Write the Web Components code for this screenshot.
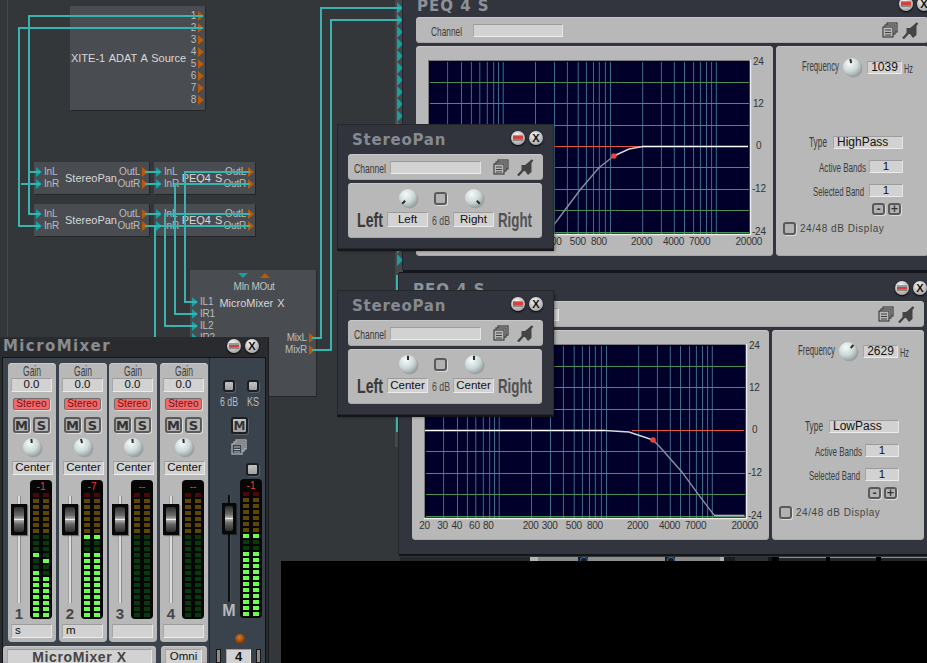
<!DOCTYPE html>
<html><head><meta charset="utf-8"><title>MicroMixer</title>
<style>html,body{margin:0;padding:0;background:#33373a;overflow:hidden}</style></head>
<body>
<x-desktop>
  <x-strip-hidden></x-strip-hidden>
  <x-node style="left:70px;top:6px;width:135px;height:104px" name="XITE-1 ADAT A Source" outs="1,2,3,4,5,6,7,8" outw="18"></x-node>
  <x-node style="left:34px;top:162px;width:115px;height:32px" name="StereoPan" ins="InL,InR" outs="OutL,OutR" inw="28" outw="29"></x-node>
  <x-node style="left:34px;top:204px;width:115px;height:32px" name="StereoPan" ins="InL,InR" outs="OutL,OutR" inw="28" outw="29"></x-node>
  <x-node style="left:154px;top:162px;width:101px;height:32px" name="PEQ4 S" ins="InL,InR" outs="OutL,OutR" inw="25" outw="30"></x-node>
  <x-node style="left:154px;top:204px;width:101px;height:32px" name="PEQ4 S" ins="InL,InR" outs="OutL,OutR" inw="25" outw="30"></x-node>
  <x-node style="left:190px;top:270px;width:126px;height:126px" name="MicroMixer X" ins="IL1,IR1,IL2,IR2" outs="MixL,MixR" inw="28" outw="30" intop="26" outtop="62" header></x-node>
  <x-wires></x-wires>
  <x-rail></x-rail>
  <x-peq style="left:403px;top:-11px" freq="1039" type="HighPass" angle="-12" mode="hp"></x-peq>
  <x-peq style="left:399px;top:273px" freq="2629" type="LowPass" angle="42" mode="lp"></x-peq>
  <x-pan style="left:338px;top:125px" l="Left" r="Right" la="-135" ra="135"></x-pan>
  <x-pan style="left:338px;top:291px" l="Center" r="Center" la="0" ra="0"></x-pan>
  <x-void></x-void>
  <x-mixer></x-mixer>
</x-desktop>
<script>
const FONT='"Liberation Sans",Arial,sans-serif';
const BASE=`*{box-sizing:border-box}`;
function def(name,fn){customElements.define(name,class extends HTMLElement{
  connectedCallback(){ if(this.shadowRoot) return; const r=this.attachShadow({mode:'open'}); r.innerHTML=fn.call(this,a=>this.getAttribute(a)); }
});}
const ctx=document.createElement('canvas').getContext('2d');

/* condensed label: text squeezed to the requested width */
def('x-n',function(a){
  const w=+a('w'),fs=+(a('fs')||12),b=this.hasAttribute('b')?'bold ':'';
  ctx.font=`${b}${fs}px "Liberation Sans"`;
  const s=w/ctx.measureText(this.textContent).width;
  return `<style>:host{display:inline-block;width:${w}px;height:${fs}px;line-height:${fs}px;white-space:nowrap;flex:none}
  span{display:inline-block;transform-origin:0 50%;transform:scaleX(${s.toFixed(3)});font:${b}${fs}px/${fs}px ${FONT}}</style><span><slot></slot></span>`;
});

def('x-field',function(a){
  const al=a('align')||'center';
  return `<style>${BASE}:host{display:flex;align-items:center;justify-content:${al};flex:none;
   background:#d2d2d2;color:#111;font:11.500px/1 ${FONT};white-space:nowrap;padding:0 ${al=='center'?0:3}px;
   border-top:1px solid #9c9c9c;border-left:1px solid #a6a6a6;border-right:1px solid #e6e6e6;border-bottom:1px solid #ececec}</style><slot></slot>`;
});

def('x-panel',function(){
  return `<style>${BASE}:host{display:block;background:#b8b8b8;border-radius:4px;flex:none;box-shadow:inset 0 1px 0 #c8c8c8,inset 0 -1px 0 #a6a6a6}</style><slot></slot>`;
});

def('x-knob',function(a){
  const an=+(a('angle')||0),id='k'+Math.random().toString(36).slice(2);
  return `<style>:host{display:block;width:18px;height:18px;flex:none}svg{display:block;overflow:visible}</style>
  <svg width="18" height="18" viewBox="0 0 18 18"><defs><radialGradient id="${id}" cx=".38" cy=".3" r=".8"><stop offset="0" stop-color="#f6fafa"/><stop offset=".55" stop-color="#ccd8d8"/><stop offset="1" stop-color="#8c9c9c"/></radialGradient></defs>
  <circle cx="10.500" cy="10.500" r="9" fill="#8c8c8c" opacity=".55"/><circle cx="9" cy="9" r="9" fill="url(#${id})"/>
  <line x1="9" y1="0.800" x2="9" y2="5" stroke="#2c2c2c" stroke-width="2" transform="rotate(${an} 9 9)"/></svg>`;
});

def('x-sq',function(a){
  const dark=this.hasAttribute('dark');
  return `<style>${BASE}:host{display:flex;align-items:center;justify-content:center;flex:none;width:12px;height:12px;
   border:2px solid ${dark?'#1b1e23':'#5a5a5a'};border-radius:3px;background:${dark?'linear-gradient(#c4c4c4,#a0a0a0)':'#b2b2b2'};
   box-shadow:1px 1px 0 ${dark?'#596068':'#dcdcdc'};color:#333;font:bold 12px/1 "DejaVu Sans",sans-serif}</style><slot></slot>`;
});

def('x-copy',function(a){
  const c=a('c')||'#3f3f3f',bg=a('bg')||'#b8b8b8';
  return `<style>:host{display:block;width:16px;height:16px;flex:none}svg{display:block}</style>
  <svg width="16" height="16" viewBox="0 0 16 16" fill="${bg}" stroke="${c}" stroke-width="1.200"><rect x="5" y="1" width="10" height="9"/><rect x="3" y="3" width="10" height="9"/><rect x="1" y="5" width="10" height="10"/><path d="M3 8h6M3 10.500h6M3 13h6"/></svg>`;
});

def('x-mute',function(){
  return `<style>:host{display:block;width:17px;height:17px;flex:none}svg{display:block}</style>
  <svg width="17" height="17" viewBox="0 0 17 17"><path d="M4.500 6h3.500l6.500-5v12l-3.500 3-3-4h-3.500z" fill="#444"/><path d="M1 16.500L15.500 1" stroke="#444" stroke-width="2.400"/></svg>`;
});

def('x-winbtns',function(){
  return `<style>${BASE}:host{display:flex;gap:4px;flex:none}
  .b{width:14px;height:14px;border-radius:50%;background:radial-gradient(circle at 40% 30%,#f4f4f4,#a8a8a8 75%,#6e6e6e);box-shadow:0 1px 2px #000;display:flex;align-items:center;justify-content:center}
  .m{width:10px;height:6px;background:linear-gradient(#999 0 1.500px,#d6403c 1.500px 4px,#888 4px)}
  .x{font:bold 11px/1 ${FONT};color:#111}</style>
  <div class="b"><div class="m"></div></div><div class="b"><span class="x">X</span></div>`;
});

def('x-desktop',function(){
  return `<style>${BASE}:host{display:block;position:relative;width:927px;height:663px;overflow:hidden;background:#33373a;font-family:${FONT}}
  .guide{position:absolute;left:7px;top:0;bottom:0;width:1px;background:#44484c}</style><div class="guide"></div><slot></slot>`;
});

def('x-strip-hidden',function(){
  let t='';for(let i=0;i<22;i++)t+=`<i></i>`;
  return `<style>${BASE}:host{position:absolute;left:395px;top:0;width:8px;height:447px;background:#44474c}
  div{display:flex;flex-direction:column;padding-top:2px}
  i{display:block;width:0;height:0;margin:0 0 0 2px;border-left:6px solid #12a2a2;border-top:6px solid transparent;border-bottom:6px solid transparent}</style><div>${t}</div>`;
});

def('x-node',function(a){
  const port=(t,side)=>`<div class="p ${side}">${side=='i'?'<b></b>':''}<span>${t}</span>${side=='o'?'<b></b>':''}</div>`;
  const ins=(a('ins')||'').split(',').filter(Boolean),outs=(a('outs')||'').split(',').filter(Boolean);
  const head=this.hasAttribute('header');
  return `<style>${BASE}:host{position:absolute;display:flex;background:#494c51;color:#d8d8d8;font:11px/1 ${FONT};box-shadow:1px 1px 0 #232528;white-space:nowrap}
  .col{flex:none;display:flex;flex-direction:column}
  .in{width:${a('inw')||0}px;padding-top:${a('intop')||4}px}
  .out{width:${a('outw')||0}px;padding-top:${a('outtop')||4}px}
  .c{flex:1;display:flex;flex-direction:column;align-items:center;justify-content:${head?'flex-start':'center'};min-width:0;word-spacing:1px}
  .p{height:12px;display:flex;align-items:center;font-size:10px;color:#bcbcbc;letter-spacing:-.2px}
  .p.o{justify-content:flex-end}
  .p b{display:block;width:0;height:0;border-top:5px solid transparent;border-bottom:5px solid transparent}
  .p.i b{border-left:6px solid #12a2a2;margin:0 2px 0 2px}
  .p.o b{border-left:6px solid #b85a08;margin:0 1px 0 2px}
  .h{display:flex;flex-direction:column;align-items:center;font-size:10px;color:#c0c0c0;margin-bottom:6px;letter-spacing:-.35px;word-spacing:0;transform:translateX(2px)}
  .t{display:flex;gap:12px;height:11px;padding-top:3px;margin-bottom:1px}
  .t i{display:block;width:0;height:0;border-left:5px solid transparent;border-right:5px solid transparent}
  .d{border-top:5px solid #12a2a2}.u{border-bottom:5px solid #b85a08}
  </style>
  ${ins.length?`<div class="col in">${ins.map(t=>port(t,'i')).join('')}</div>`:''}
  <div class="c">${head?`<div class="h"><div class="t"><i class="d"></i><i class="u"></i></div><span>MIn MOut</span></div>`:''}<span>${a('name')}</span></div>
  <div class="col out">${outs.map(t=>port(t,'o')).join('')}</div>`;
});

def('x-wires',function(){
  const d=['M203 16H29V214H40','M29 172H40','M203 28H19V226H40','M21 184H40',
   'M145 172H160','M145 184H160','M145 214H160','M145 226H160',
   'M250 172H185V302H197','M250 184H175V314H197','M250 214H165V326H197','M250 226H155V338H197',
   'M312 338H321V8H401','M312 350H331V20H401','M397 275V292','M397 413V432'];
  return `<style>:host{position:absolute;left:0;top:0;width:927px;height:663px;display:block;pointer-events:none}svg{display:block}</style>
  <svg width="927" height="663" fill="none" stroke="#3ab3b0" stroke-width="2" shape-rendering="crispEdges">${d.map(p=>`<path d="${p}"/>`).join('')}</svg>`;
});

def('x-rail',function(){
  const seg=(w,c)=>`<i style="width:${w}px;background:${c}"></i>`;
  const thin=(w)=>`<i class="t" style="width:${w}px;background:#8c8c8c"></i>`;
  const dot=`<u></u>`;
  return `<style>${BASE}:host{position:absolute;left:400px;top:557px;width:527px;height:4px;display:flex;background:#24262a}
  i{display:block;height:100%}
  u{display:block;width:10px;height:100%;background:#1a1c20;position:relative}
  u::after{content:"";position:absolute;left:2px;top:0;width:6px;height:4px;border:1px solid #1f6fb5;border-radius:50%}
  .t{height:1px}
  </style>${seg(130,'#26282b')}${seg(8,'#b5b5b5')}${seg(40,'#8c8c8c')}${dot}${seg(77,'#8e8e8e')}${dot}${seg(45,'#8a8a8a')}${seg(4,'#b0b0b0')}${seg(11,'#1a1c20')}${seg(33,'#2e2f32')}${seg(4,'#17181b')}${seg(7,'#000')}${thin(47)}${seg(4,'#000')}${thin(46)}${seg(5,'#000')}${thin(46)}`;
});

def('x-void',function(){
  return `<style>${BASE}:host{position:absolute;left:281px;top:561px;width:646px;height:102px;background:#000}</style>`;
});

def('x-graph',function(a){
  const V=[19.6,33.5,43.4,51.8,59.3,65.7,70.5,75.2,107.5,126.5,139.4,150.2,158.4,165.5,171.3,177.4,182.5,214.7,233.4,246.3,256.5,265.6,272.4,278.5,283.6,288.3];
  const H=[22,43,65,107,129,150,172];
  const X=[[.5,'20'],[18.5,'30'],[32.8,'40'],[50.4,'60'],[64.3,'80'],[106.7,'200'],[125.7,'300'],[149.8,'500'],[170.9,'800'],[213.6,'2000'],[245.5,'4000'],[271.6,'7000'],[320.8,'20000']];
  const Y=[[1,'24'],[43,'12'],[85,'0'],[128,'-12'],[171,'-24']];
  const hp=a('mode')=='hp';
  const curve=hp?`<line x1="2" x2="214" y1="86.500" y2="86.500" stroke="#ea5540"/>
    <polyline points="121,172 126.500,164 152,130 170.600,108 185.900,96" fill="none" stroke="#8e8ea2" stroke-width="1.400"/>
    <polyline points="185.900,96 201,89 214.700,86.500" fill="none" stroke="#d8d8d8" stroke-width="1.400"/>
    <line x1="214" x2="320" y1="86.500" y2="86.500" stroke="#fff" stroke-width="1.500"/><circle cx="185.900" cy="96" r="2.800" fill="#f04040"/>`
   :`<line x1="208" x2="320" y1="86.500" y2="86.500" stroke="#ea5540"/>
    <line x1="1" x2="181" y1="86.500" y2="86.500" stroke="#fff" stroke-width="1.500"/>
    <polyline points="181,86.500 205,88 229,96" fill="none" stroke="#d8d8d8" stroke-width="1.400"/>
    <polyline points="229,96 235.700,102.700 257.700,127.700 276,152.700 290,171" fill="none" stroke="#8e8ea2" stroke-width="1.400"/>
    <line x1="290" x2="320.500" y1="171.500" y2="171.500" stroke="#b4b4b8" stroke-width="1.600"/><circle cx="229" cy="96" r="2.800" fill="#f04040"/>`;
  return `<style>:host{display:block;width:322px;height:174px;flex:none}svg{display:block;overflow:visible}
  text{font:10px ${FONT};fill:#333;letter-spacing:-.25px}</style>
  <svg width="322" height="174" viewBox="0 0 322 174">
  <rect width="322" height="174" fill="#00002a"/>
  ${V.map(x=>`<line x1="${x}" x2="${x}" y1="2" y2="174" stroke="#3f6c8c"/>`).join('')}
  ${H.map(y=>`<line x1="2" x2="321" y1="${y+.5}" y2="${y+.5}" stroke="#4c8e58"/>`).join('')}
  ${curve}
  <path d="M.5 174V.5H322" fill="none" stroke="#7c7c7c"/><path d="M0 174.500H322.500V0" fill="none" stroke="#ececec" stroke-width="1.500"/>
  ${X.map(([x,t])=>`<text x="${x}" y="185" text-anchor="middle">${t}</text>`).join('')}
  ${Y.map(([y,t])=>`<text x="${t=='0'?328:t[0]=='-'?324:325}" y="${y+4}">${t}</text>`).join('')}
  </svg>`;
});

def('x-peq',function(a){
  return `<style>${BASE}:host{position:absolute;display:block;width:535px;height:281px;background:#32353d;box-shadow:0 -1px 0 #15161a,0 2px 0 #15161a,-1px 0 0 #23252a;color:#3c3c3c;font-family:${FONT}}
  .bar{height:28px;display:flex;align-items:flex-end;justify-content:space-between;padding:0 7px 6px 14px}
  .title{font:bold 15px/1 "DejaVu Sans",sans-serif;letter-spacing:1px;color:#8e9298;margin-bottom:-3px}
  .wrap{padding-left:13px;width:525px}
  .ch{height:26px;display:flex;align-items:center;padding:0 9px 0 15px}
  .ch x-field{margin-left:11px;width:90px;height:13px}
  .sp{flex:1}
  .ch x-mute{margin-left:4px}
  .row{display:flex;gap:3px;margin-top:3px;height:210px}
  .gp{width:357px;padding:14px 0 0 12px}
  .rp{width:152px;display:flex;flex-direction:column}
  .rw{display:flex;align-items:center;justify-content:flex-end;padding-right:25px}
  .rw x-n{margin-right:3px}
  .v{width:34px;height:13px}
  .pm{width:13px;height:12px;font-size:10px}
  .t{font:10px/1 ${FONT};letter-spacing:.55px;color:#444;margin-left:4px}
  </style>
  <div class="bar"><span class="title">PEQ 4 S</span><x-winbtns></x-winbtns></div>
  <div class="wrap">
   <x-panel><div class="ch"><x-n w="31" fs="13">Channel</x-n><x-field></x-field><div class="sp"></div><x-copy></x-copy><x-mute></x-mute></div></x-panel>
   <div class="row">
    <x-panel class="gp"><x-graph mode="${a('mode')}"></x-graph></x-panel>
    <x-panel class="rp">
      <div class="rw" style="margin-top:11px;height:20px;padding-right:15px"><x-n w="37" fs="14" style="margin:-3px 4px 0 0">Frequency</x-n><x-knob angle="${a('angle')}"></x-knob><x-field style="width:35px;height:13px;margin:0 2px 0 6px;font-size:12px">${a('freq')}</x-field><x-n w="9" fs="13" style="margin:0">Hz</x-n></div>
      <div class="rw" style="margin-top:58px"><x-n w="18" fs="14" style="margin-right:6px">Type</x-n><x-field align="flex-start" style="width:70px;height:13px;font-size:12px">${a('type')}</x-field></div>
      <div class="rw" style="margin-top:11px"><x-n w="47" fs="13">Active Bands</x-n><x-field class="v">1</x-field></div>
      <div class="rw" style="margin-top:11px"><x-n w="51" fs="13" style="margin-right:5px">Selected Band</x-n><x-field class="v">1</x-field></div>
      <div class="rw" style="margin-top:6px;gap:3px;padding-right:27px"><x-sq class="pm">-</x-sq><x-sq class="pm">+</x-sq></div>
      <div style="display:flex;align-items:center;margin:7px 0 0 7px"><x-sq style="width:13px;height:13px"></x-sq><span class="t">24/48 dB Display</span></div>
    </x-panel>
   </div>
  </div>`;
});

def('x-pan',function(a){
  return `<style>${BASE}:host{position:absolute;display:block;width:215px;height:123px;background:#31343c;box-shadow:0 0 0 1px #25272c,0 2px 0 1px #15161a,2px 3px 3px rgba(0,0,0,.45);color:#3a3a3a;font-family:${FONT}}
  .bar{height:29px;display:flex;align-items:center;justify-content:space-between;padding:0 10px 3px 14px}
  .title{font:bold 15px/1 "DejaVu Sans",sans-serif;letter-spacing:.75px;color:#868a90;padding-top:5px}
  .ch{display:flex;align-items:center;height:26px;padding:0 8px 0 6px}
  .ch x-field{width:91px;height:13px;margin:0 12px 0 4px}
  .ch x-mute{margin-left:8px}
  x-panel{margin-left:10px}
  .a{width:195px}
  .b{width:194px;height:55px;margin-top:3px;padding:6px 0 0 8px;display:grid;grid-template-columns:27px 41px 17px 41px 34px;grid-template-rows:18px 15px;column-gap:4px;row-gap:5px;align-items:center;justify-items:center}
  .six{color:#4a4a4a}
  </style>
  <div class="bar"><span class="title">StereoPan</span><x-winbtns></x-winbtns></div>
  <x-panel class="a"><div class="ch"><x-n w="32" fs="13">Channel</x-n><x-field></x-field><x-copy></x-copy><x-mute></x-mute></div></x-panel>
  <x-panel class="b">
    <span></span><x-knob angle="${a('la')}"></x-knob><x-sq style="width:13px;height:13px"></x-sq><x-knob angle="${a('ra')}"></x-knob><span></span>
    <x-n w="26" fs="20" b>Left</x-n><x-field style="width:41px;height:15px">${a('l')}</x-field><x-n class="six" w="18" fs="12">6 dB</x-n><x-field style="width:41px;height:15px">${a('r')}</x-field><x-n w="34" fs="20" b style="color:#505050">Right</x-n>
  </x-panel>`;
});

function bars(spec){const o=new Set();(spec||'').split(',').filter(Boolean).forEach(s=>{const[p,q]=s.split('-').map(Number);for(let i=p;i<=(q??p);i++)o.add(i)});return o;}
def('x-meter',function(a){
  const L=bars(a('l')),R=bars(a('r')??a('l'));
  let cells='';
  for(let r=0;r<21;r++)for(const S of[L,R]){
    const col=r==0?'#4c0808':r<7?'#5c4600':S.has(r)?'#6cff52':'#053a0c';
    cells+=`<i style="background:${col}"></i>`;
  }
  return `<style>${BASE}:host{display:block;width:22px;height:139px;background:#060606;border-radius:4px;flex:none;padding-left:3px}
  .v{height:13px;font:10px/14px ${FONT};color:#f03a30;text-align:center;width:16px;margin-left:0}
  .g{display:grid;grid-template-columns:6px 6px;column-gap:4px;row-gap:2px;grid-auto-rows:4px}
  i{display:block}</style><div class="v">${a('v')}</div><div class="g">${cells}</div>`;
});

def('x-fader',function(a){
  const dark=this.hasAttribute('dark');
  return `<style>${BASE}:host{display:flex;flex-direction:column;align-items:center;flex:none;width:${dark?14:16}px;height:139px;padding-top:16px}
  .tr{position:relative;width:2px;height:107px;background:${dark?'#0c0e10':'#dedede'};box-shadow:${dark?'1px 0 0 #4a5058':'1px 0 0 #8c8c8c,-1px 0 0 #a0a0a0'};flex:none}
  .th{position:absolute;left:50%;top:8px;width:${dark?14:16}px;height:31px;margin-left:${dark?-7:-8}px;background:#080808;padding:3px;box-shadow:1px 1px 1px rgba(0,0,0,.4)}
  .in{width:100%;height:100%;border-radius:2px;background:linear-gradient(#2c2c2c,#6e6e6e 35%,#a8a8a8 46%,#f0f0f0 50%,#a8a8a8 54%,#666 68%,#2c2c2c)}
  .n{margin-top:${dark?1:3}px;font:bold ${dark?16:15}px/16px ${FONT};color:${dark?'#b4b8bc':'#464646'}}</style>
  <div class="tr"><div class="th"><div class="in"></div></div></div><div class="n">${a('n')}</div>`;
});

def('x-strip',function(a){
  return `<style>${BASE}:host{display:flex;flex-direction:column;width:48px;height:279px;background:#b8b8b8;border-radius:4px;flex:none;color:#3e3e3e;font-family:${FONT};box-shadow:inset 0 1px 0 #cacaca}
  .g{height:15px;display:flex;justify-content:center;align-items:flex-end}
  .f{margin-left:3px;width:41px;height:14px}
  .st{margin:6px 0 0 5px;width:37px;height:12px;display:flex;align-items:center;justify-content:center;background:#f26a6c;border:1px solid #6d6d6d;border-radius:2px;box-shadow:1px 1px 0 #dedede;font:10px/1 ${FONT};color:#6d1414;letter-spacing:.2px}
  .ms{display:flex;gap:3px;margin:7px 0 0 5px}
  x-sq.b{width:17px;height:16px;font-size:13px}
  .k{display:flex;justify-content:center;margin-top:5px}
  .row{display:flex;gap:3px;margin:5px 0 0 3px}
  </style>
  <div class="g"><x-n w="18" fs="14">Gain</x-n></div>
  <x-field class="f">0.0</x-field>
  <div class="st">Stereo</div>
  <div class="ms"><x-sq class="b">M</x-sq><x-sq class="b">S</x-sq></div>
  <div class="k"><x-knob angle="${a('angle')||-4}"></x-knob></div>
  <x-field class="f" style="margin-top:5px;margin-left:4px">Center</x-field>
  <div class="row"><x-fader n="${a('n')}"></x-fader><x-meter v="${a('v')}" l="${a('l')||''}" r="${a('r')??a('l')??''}"></x-meter></div>
  <x-field class="f" align="flex-start" style="margin-top:5px">${a('name')||''}</x-field>`;
});

def('x-mixer',function(){
  return `<style>${BASE}:host{position:absolute;left:0;top:337px;display:block;width:268px;height:326px;background:#292b2f;overflow:hidden;font-family:${FONT};box-shadow:1px 0 0 #1b1c20}
  .bar{height:20px;display:flex;align-items:center;justify-content:space-between;padding:0 9px 2px 3px}
  .title{font:bold 15px/1 "DejaVu Sans",sans-serif;letter-spacing:1.400px;color:#8a8c90}
  .body{display:flex;width:264px;height:306px;margin-left:2px;border:1px solid #14151a;border-bottom:0;background:#3a424b}
  .left{width:206px;flex:none}
  .strips{display:flex;padding:5px 0 0 5px}
  .bot{display:flex;margin-top:4px;height:17px}
  .bot x-panel{height:17px;padding:3px 4px 0;border-radius:4px 4px 0 0}
  .bot x-field{height:14px;border-bottom:0}
  .mf{font:bold 14px/1 ${FONT};letter-spacing:.6px;color:#444;width:145px}
  .m{flex:1;border-left:1px solid #23272d;padding-top:22px;color:#b8bcc0}
  .two{display:grid;grid-template-columns:12px 12px;column-gap:12px;grid-template-rows:12px 10px;row-gap:3px;margin-left:13px;justify-items:center}
  .row{display:flex;gap:4px;margin:3px 0 0 12px}
  .led{width:10px;height:10px;border-radius:50%;margin:16px 0 0 25px;background:radial-gradient(circle at 45% 35%,#d87a28,#7a3806 70%,#3a2008)}
  .last{display:flex;gap:5px;margin:5px 0 0 6px}
  .sl{width:5px;height:14px;background:#8c8c8c;border:1px solid #141414}
  .num{width:25px;height:14px;border-bottom:0;font:bold 13px/1 ${FONT}}
  </style>
  <div class="bar"><span class="title">MicroMixer</span><x-winbtns></x-winbtns></div>
  <div class="body">
   <div class="left">
    <div class="strips">
     <x-strip n="1" v="-1" l="10,13-20" r="11,14-20" name="s"></x-strip>
     <x-strip style="margin-left:3px" n="2" v="-7" l="7,10-20" name="m" angle="-14"></x-strip>
     <x-strip style="margin-left:2px" n="3" v="--" l=""></x-strip>
     <x-strip style="margin-left:3px" n="4" v="--" l=""></x-strip>
    </div>
    <div class="bot">
     <x-panel style="width:153px"><x-field class="mf">MicroMixer X</x-field></x-panel>
     <x-panel style="width:46px;margin-left:5px"><x-field style="width:37px">Omni</x-field></x-panel>
    </div>
   </div>
   <div class="m">
    <div class="two"><x-sq dark></x-sq><x-sq dark></x-sq><x-n w="18" fs="12">6 dB</x-n><x-n w="12" fs="12">KS</x-n></div>
    <x-sq dark style="width:17px;height:17px;margin:12px 0 0 21px">M</x-sq>
    <x-copy c="#b8bcc0" bg="#3a424b" style="margin:5px 0 0 21px"></x-copy>
    <x-sq dark style="width:13px;height:13px;margin:8px 0 0 36px"></x-sq>
    <div class="row"><x-fader dark n="M"></x-fader><x-meter v="-1" l="7,10-20"></x-meter></div>
    <div class="led"></div>
    <div class="last"><div class="sl"></div><x-field class="num">4</x-field><div class="sl"></div></div>
   </div>
  </div>`;
});
</script>
</body></html>
